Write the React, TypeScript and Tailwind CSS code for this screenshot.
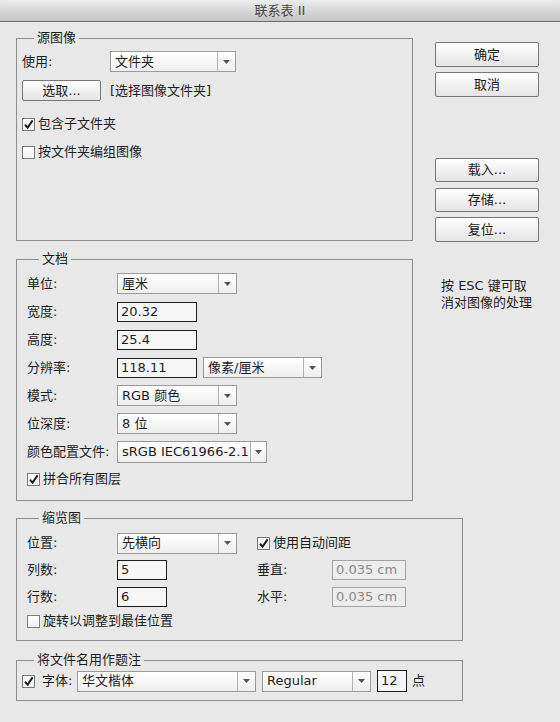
import React from "react";
import clsx from "clsx";

const Arrow = () => (
  <svg width="7" height="4" viewBox="0 0 7 4">
    <path d="M0 0h7L3.5 4z" fill="#555" />
  </svg>
);

interface SelectProps {
  value: string;
  className?: string;
  arrowClass?: string;
}

const Select = ({ value, className, arrowClass = "w-[18px]" }: SelectProps) => (
  <div
    className={clsx(
      "flex h-[21px] shrink-0 border border-[#9a9a9a] bg-linear-to-b from-white to-[#eeeeee]",
      className
    )}
  >
    <div className="flex flex-1 items-center overflow-hidden whitespace-nowrap pl-[4px]">
      {value}
    </div>
    <div
      className={clsx(
        "flex items-center justify-center border-l border-[#b3b3b3]",
        arrowClass
      )}
    >
      <Arrow />
    </div>
  </div>
);

const Input = ({
  value,
  className,
  disabled,
}: {
  value: string;
  className?: string;
  disabled?: boolean;
}) => (
  <div
    className={clsx(
      "flex h-[20px] shrink-0 items-center pl-[3px]",
      disabled
        ? "border border-[#a3a3a3] bg-[#ececec] text-[#8a8a8a]"
        : "border border-[#1c1c1c] bg-[#f6f6f6]",
      className
    )}
  >
    {value}
  </div>
);

const Button = ({ label, className }: { label: string; className?: string }) => (
  <button
    className={clsx(
      "flex items-center justify-center rounded-[2px] border border-[#777] bg-linear-to-b from-white to-[#e4e4e4] text-[#1a1a1a]",
      className
    )}
  >
    {label}
  </button>
);

const Check = ({ label, checked }: { label: string; checked?: boolean }) => (
  <div className="flex h-[16px] items-center">
    <span className="flex h-[13px] w-[13px] shrink-0 items-center justify-center border border-[#7b7b7b] bg-linear-to-b from-white to-[#f0f0f0]">
      {checked && (
        <svg width="11" height="11" viewBox="0 0 11 11">
          <path
            d="M2 5.8 L4.6 8.6 L9.6 1.4"
            fill="none"
            stroke="#1e1e1e"
            strokeWidth="2"
          />
        </svg>
      )}
    </span>
    <span className="ml-[3px]">{label}</span>
  </div>
);

const Group = ({
  title,
  className,
  children,
}: {
  title: string;
  className?: string;
  children: React.ReactNode;
}) => (
  <fieldset className={clsx("min-w-0 border border-[#8e8e8e]", className)}>
    <legend className="ml-[12px] px-[3px] leading-[16px]">{title}</legend>
    {children}
  </fieldset>
);

const Row = ({ label, children }: { label: string; children: React.ReactNode }) => (
  <div className="flex h-[21px] items-center">
    <span className="w-[90px] shrink-0">{label}</span>
    {children}
  </div>
);

export default function App() {
  return (
    <div className="h-[722px] w-[560px] overflow-hidden bg-[#e8e8e8] font-['DejaVu_Sans','Noto_Sans_CJK_SC',sans-serif] text-[13px] leading-[16px] text-[#1e1e1e]">
      {/* title bar */}
      <div className="flex h-[22px] items-center justify-center rounded-t-[4px] border-b border-[#6c6c6c] bg-linear-to-b from-[#ececec] to-[#c4c4c4] text-[#4a4a4a]">
        联系表 II
      </div>

      <div className="px-[16px] pt-[8px]">
        <div className="flex items-start">
          <div className="flex w-[397px] flex-col">
            {/* 源图像 */}
            <Group title="源图像" className="h-[211px] pl-[5px] pt-[5px]">
              <div className="flex h-[21px] items-center">
                <span className="w-[88px]">使用:</span>
                <Select value="文件夹" className="w-[126px]" />
              </div>
              <div className="mt-[8px] flex items-center">
                <Button label="选取..." className="h-[21px] w-[79px]" />
                <span className="ml-[9px]">[选择图像文件夹]</span>
              </div>
              <div className="mt-[15px]">
                <Check label="包含子文件夹" checked />
              </div>
              <div className="mt-[12px]">
                <Check label="按文件夹编组图像" />
              </div>
            </Group>

            {/* 文档 */}
            <Group title="文档" className="mt-[10px] h-[250px] pl-[10px] pt-[6px]">
              <div className="flex flex-col gap-[7px]">
                <Row label="单位:">
                  <Select value="厘米" className="w-[120px]" />
                </Row>
                <Row label="宽度:">
                  <Input value="20.32" className="w-[80px]" />
                </Row>
                <Row label="高度:">
                  <Input value="25.4" className="w-[80px]" />
                </Row>
                <Row label="分辨率:">
                  <Input value="118.11" className="w-[80px]" />
                  <Select value="像素/厘米" className="ml-[6px] w-[119px]" />
                </Row>
                <Row label="模式:">
                  <Select value="RGB 颜色" className="w-[120px]" />
                </Row>
                <Row label="位深度:">
                  <Select value="8 位" className="w-[120px]" />
                </Row>
                <Row label="颜色配置文件:">
                  <Select
                    value="sRGB IEC61966-2.1"
                    className="h-[22px] w-[150px]"
                    arrowClass="w-[16px]"
                  />
                </Row>
              </div>
              <div className="mt-[9px]">
                <Check label="拼合所有图层" checked />
              </div>
            </Group>
          </div>

          {/* right buttons */}
          <div className="ml-[22px] mt-[12px] flex w-[104px] flex-col">
            <Button label="确定" className="h-[25px]" />
            <Button label="取消" className="mt-[5px] h-[25px]" />
            <Button label="载入..." className="mt-[61px] h-[24px]" />
            <Button label="存储..." className="mt-[6px] h-[24px]" />
            <Button label="复位..." className="mt-[5px] h-[25px]" />
            <p className="mt-[35px] pl-[6px] leading-[17px]">
              按 ESC 键可取
              <br />
              消对图像的处理
            </p>
          </div>
        </div>

        {/* 缩览图 */}
        <Group title="缩览图" className="mt-[9px] h-[131px] w-[447px] pl-[10px] pt-[7px]">
          <div className="grid grid-cols-[90px_140px_75px_74px] grid-rows-[20px_20px_20px] items-center gap-y-[7px]">
            <span>位置:</span>
            <Select value="先横向" className="h-[20px] w-[120px]" />
            <div className="col-span-2">
              <Check label="使用自动间距" checked />
            </div>
            <span>列数:</span>
            <Input value="5" className="h-[19px] w-[50px]" />
            <span>垂直:</span>
            <Input value="0.035 cm" className="h-[19px] w-[74px]" disabled />
            <span>行数:</span>
            <Input value="6" className="h-[19px] w-[50px]" />
            <span>水平:</span>
            <Input value="0.035 cm" className="h-[19px] w-[74px]" disabled />
          </div>
          <div className="mt-[6px]">
            <Check label="旋转以调整到最佳位置" />
          </div>
        </Group>

        {/* 将文件名用作题注 */}
        <Group title="将文件名用作题注" className="mt-[11px] h-[49px] w-[447px] pl-[5px] pt-[2px]">
          <div className="flex h-[22px] items-center">
            <Check label="" checked />
            <span className="ml-[4px] w-[35px]">字体:</span>
            <Select value="华文楷体" className="w-[179px]" />
            <Select value="Regular" className="ml-[6px] w-[109px]" />
            <Input value="12" className="ml-[6px] h-[22px] w-[30px]" />
            <span className="ml-[5px]">点</span>
          </div>
        </Group>
      </div>
    </div>
  );
}
